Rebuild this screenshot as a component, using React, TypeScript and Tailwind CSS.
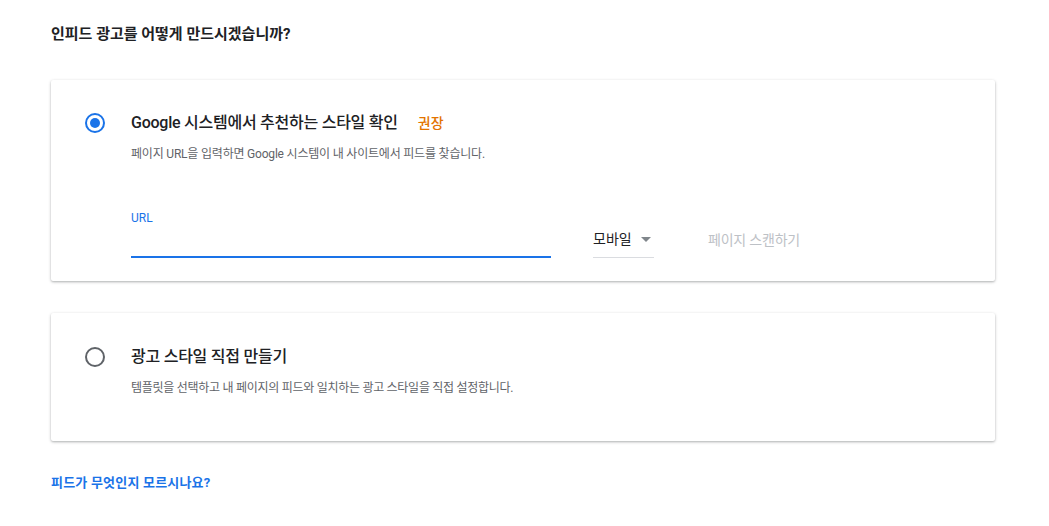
import React from "react";

const font = { fontFamily: "Roboto, 'Noto Sans CJK KR', sans-serif" };

function Radio({ checked }: { checked: boolean }) {
  return (
    <div
      className={`w-[20px] h-[20px] rounded-full border-2 flex items-center justify-center shrink-0 ${
        checked ? "border-[#1a73e8]" : "border-[#5f6368]"
      }`}
    >
      {checked && <div className="w-[10px] h-[10px] rounded-full bg-[#1a73e8]" />}
    </div>
  );
}

export default function App() {
  return (
    <div className="w-[1049px] h-[526px] bg-white px-[51px] pt-[24px]" style={font}>
      <div className="w-[944px]">
        <h1 className="text-[15px] leading-[20px] font-bold text-[#202124]">
          인피드 광고를 어떻게 만드시겠습니까?
        </h1>

        <div className="mt-[36px] h-[201px] bg-white rounded-[2px] shadow-[0_1px_3px_rgba(60,64,67,0.3),0_1px_2px_rgba(60,64,67,0.15)] pl-[34px] pt-[31px] flex">
          <div className="pt-[2px]">
            <Radio checked />
          </div>
          <div className="ml-[26px] flex flex-col">
            <div className="flex items-center h-[24px]">
              <span className="text-[16px] font-medium text-[#202124] tracking-[-0.25px]">
                Google 시스템에서 추천하는 스타일 확인
              </span>
              <span className="ml-[20px] text-[14px] font-medium text-[#e37400]">권장</span>
            </div>
            <div className="mt-[11px] text-[12px] leading-[16px] text-[#5f6368] tracking-[-0.2px]">
              페이지 URL을 입력하면 Google 시스템이 내 사이트에서 피드를 찾습니다.
            </div>
            <div className="mt-[48px] flex items-end">
              <div className="w-[420px] flex flex-col">
                <div className="text-[12px] leading-[16px] text-[#1a73e8]">URL</div>
                <div className="h-[30px]" />
                <div className="h-[2px] bg-[#1a73e8]" />
              </div>
              <div className="ml-[42px] w-[61px] flex flex-col">
                <div className="flex items-center justify-between h-[22px]">
                  <span className="text-[14px] text-[#202124]">모바일</span>
                  <svg width="10" height="5" viewBox="0 0 10 5" className="mr-[3px]">
                    <path d="M0 0 L10 0 L5 5 Z" fill="#80868b" />
                  </svg>
                </div>
                <div className="mt-[7px] h-[1px] bg-[#dadce0]" />
              </div>
              <div className="ml-[54px] mb-[8px] text-[14px] leading-[20px] text-[#bdc1c6] tracking-[-0.2px]">
                페이지 스캔하기
              </div>
            </div>
          </div>
        </div>

        <div className="mt-[32px] h-[128px] bg-white rounded-[2px] shadow-[0_1px_3px_rgba(60,64,67,0.3),0_1px_2px_rgba(60,64,67,0.15)] pl-[34px] pt-[32px] flex">
          <div className="pt-[2px]">
            <Radio checked={false} />
          </div>
          <div className="ml-[26px] flex flex-col">
            <div className="flex items-center h-[24px]">
              <span className="text-[16px] font-medium text-[#202124] tracking-[-0.25px]">광고 스타일 직접 만들기</span>
            </div>
            <div className="mt-[11px] text-[12px] leading-[16px] text-[#5f6368] tracking-[-0.28px]">
              템플릿을 선택하고 내 페이지의 피드와 일치하는 광고 스타일을 직접 설정합니다.
            </div>
          </div>
        </div>

        <div className="mt-[32px] text-[13px] leading-[20px] font-bold text-[#1a73e8] tracking-[0.2px]">
          피드가 무엇인지 모르시나요?
        </div>
      </div>
    </div>
  );
}
